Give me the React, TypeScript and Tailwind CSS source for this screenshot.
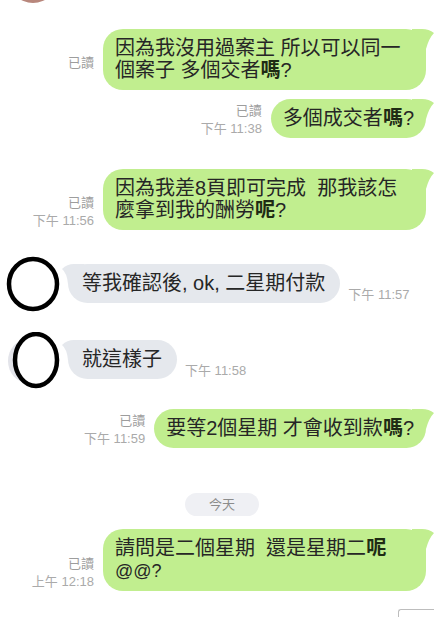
import React from 'react';

type Part = { t: string; b?: boolean; small?: boolean };

const RightTail = ({ color }: { color: string }) => (
  <svg className="absolute top-0 right-[-8px]" width="22" height="22" viewBox="0 0 22 22">
    <path d="M0 0 L10 0 Q17 0 22 4 Q17 9 14 20 L0 20 Z" fill={color} />
  </svg>
);

const LeftTail = ({ color }: { color: string }) => (
  <svg className="absolute top-0 left-[-6px]" width="22" height="22" viewBox="0 0 22 22">
    <path d="M22 0 L12 0 Q5 0 0 5 Q5 9 6 20 L22 20 Z" fill={color} />
  </svg>
);

const Parts = ({ lines }: { lines: Part[][] }) => (
  <>
    {lines.map((line, i) => (
      <div key={i}>
        {line.map((p, j) =>
          p.b ? (
            <b key={j} className="font-bold text-[#1e2b14]">
              {p.t}
            </b>
          ) : (
            <span key={j} className={p.small ? 'text-[18px]' : ''}>
              {p.t}
            </span>
          )
        )}
      </div>
    ))}
  </>
);

const Meta = ({ time }: { time?: string }) => (
  <div className="flex flex-col items-end text-[13px] leading-[18px] text-[#9d9d9d] whitespace-nowrap">
    <span>已讀</span>
    <span className={time ? 'text-[#aaaaaa]' : 'invisible'}>{time ?? '下午 00:00'}</span>
  </div>
);

const Sent = ({ lines, time, wide, className }: { lines: Part[][]; time?: string; wide?: boolean; className: string }) => (
  <div className={`flex justify-end items-end gap-[9px] pr-[8px] ${className}`}>
    <Meta time={time} />
    <div
      className={`relative rounded-[20px] bg-[#c1ee8f] pl-[12px] pr-[12px] pt-[8px] pb-[9px] text-[20px] leading-[22px] text-[#262626] whitespace-pre ${
        wide ? 'w-[323px]' : ''
      }`}
    >
      <RightTail color="#c1ee8f" />
      <div className="relative">
        <Parts lines={lines} />
      </div>
    </div>
  </div>
);

const Received = ({ text, time, avatar, className }: { text: string; time: string; avatar: React.ReactNode; className: string }) => (
  <div className={`flex items-start ${className}`}>
    {avatar}
    <div className="flex items-end gap-[8px] mt-[8px]">
      <div className="relative rounded-[20px] bg-[#e5e8ed] pl-[14px] pr-[15px] pt-[8px] pb-[9px] text-[20px] leading-[22px] text-[#262626] whitespace-pre">
        <LeftTail color="#e5e8ed" />
        <div className="relative">{text}</div>
      </div>
      <span className="text-[13px] leading-[16px] text-[#aaaaaa] whitespace-nowrap">{time}</span>
    </div>
  </div>
);

export default function App() {
  return (
    <div className="w-[434px] h-[617px] overflow-hidden bg-white font-['Liberation_Sans','Noto_Sans_CJK_TC',sans-serif]">
      <svg width="434" height="4" className="block">
        <circle cx="33" cy="-22" r="25" fill="#b8877c" />
        <circle cx="33" cy="-23" r="23" fill="#d9b3a8" />
      </svg>

      <Sent
        className="mt-[25px]"
        wide
        lines={[
          [{ t: '因為我沒用過案主 所以可以同一' }],
          [{ t: '個案子 多個交者' }, { t: '嗎', b: true }, { t: '?' }],
        ]}
      />
      <Sent
        className="mt-[9px]"
        time="下午 11:38"
        lines={[[{ t: '多個成交者' }, { t: '嗎', b: true }, { t: '?' }]]}
      />
      <Sent
        className="mt-[31px]"
        wide
        time="下午 11:56"
        lines={[
          [{ t: '因為我差8頁即可完成  那我該怎' }],
          [{ t: '麼拿到我的酬勞' }, { t: '呢', b: true }, { t: '?' }],
        ]}
      />

      <Received
        className="mt-[26px]"
        text="等我確認後, ok, 二星期付款"
        time="下午 11:57"
        avatar={
          <svg width="68" height="56" className="shrink-0">
            <ellipse cx="33" cy="28" rx="24" ry="25" fill="white" stroke="black" strokeWidth="4.5" />
          </svg>
        }
      />
      <Received
        className="mt-[20px]"
        text="就這樣子"
        time="下午 11:58"
        avatar={
          <svg width="68" height="57" className="shrink-0">
            <ellipse cx="28" cy="29" rx="20" ry="22" fill="#e3e4ea" />
            <ellipse cx="36" cy="28" rx="21" ry="26" fill="white" stroke="black" strokeWidth="4.5" />
          </svg>
        }
      />

      <Sent
        className="mt-[20px]"
        time="下午 11:59"
        lines={[[{ t: '要等2個星期 才會收到款' }, { t: '嗎', b: true }, { t: '?' }]]}
      />

      <div className="flex justify-center mt-[45px] pl-[10px]">
        <div className="w-[74px] h-[23px] rounded-full bg-[#eff0f4] flex items-center justify-center text-[13px] text-[#8c8c8c]">
          今天
        </div>
      </div>

      <Sent
        className="mt-[13px]"
        wide
        time="上午 12:18"
        lines={[
          [{ t: '請問是二個星期  還是星期二' }, { t: '呢', b: true }],
          [{ t: '@@?', small: true }],
        ]}
      />

      <div className="flex justify-end mt-[18px]">
        <div className="w-[36px] h-[12px] bg-white border-t border-l border-[#bdbdbd] rounded-tl-[3px]" />
      </div>
    </div>
  );
}
